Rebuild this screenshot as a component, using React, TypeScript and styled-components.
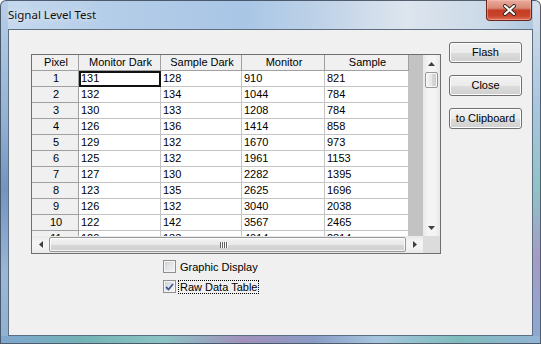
import styled, { createGlobalStyle } from 'styled-components';

type Row = [number, number, number, number, number];

const rows: Row[] = [
  [1, 131, 128, 910, 821],
  [2, 132, 134, 1044, 784],
  [3, 130, 133, 1208, 784],
  [4, 126, 136, 1414, 858],
  [5, 129, 132, 1670, 973],
  [6, 125, 132, 1961, 1153],
  [7, 127, 130, 2282, 1395],
  [8, 123, 135, 2625, 1696],
  [9, 126, 132, 3040, 2038],
  [10, 122, 142, 3567, 2465],
  [11, 120, 133, 4014, 2814],
];

const headers = ['Pixel', 'Monitor Dark', 'Sample Dark', 'Monitor', 'Sample'];

const GlobalStyle = createGlobalStyle`
  html, body {
    margin: 0;
    padding: 0;
    overflow: hidden;
    background: #fff;
  }
  body {
    font-family: "Liberation Sans", Arial, sans-serif;
  }
`;

const Window = styled.div`
  width: 541px;
  height: 344px;
  box-sizing: border-box;
  border: 1px solid rgba(40, 52, 70, 0.75);
  border-radius: 6px 6px 0 0;
  padding: 0 7px 7px;
  display: flex;
  flex-direction: column;
  background:
    linear-gradient(to right, #7fa6cf 0%, #73b3b5 15%, #8cc4c4 30%, #a190bb 45%, #8a9cc6 58%, #a6c6de 70%, #7fbcbc 85%, #93b4d6 100%) bottom / 100% 7px no-repeat,
    linear-gradient(#b8cee8 0%, #93b1d4 35%, #7494bf 55%, #9bb7d8 80%, #8fb0d2 100%) left / 7px 100% no-repeat,
    linear-gradient(#d6e0ea 0%, #a9c6de 30%, #8fc3c6 55%, #a59bc4 75%, #8aaad4 100%) right / 7px 100% no-repeat,
    linear-gradient(to right, #c6d9ee 0%, #b4cde8 20%, #a9c6e6 45%, #c0d3e8 60%, #dde5ee 75%, #cbd9e7 90%, #abc5df 100%);
`;

const TitleBar = styled.div`
  height: 28px;
  display: flex;
  align-items: flex-start;
`;

const Title = styled.div`
  margin-top: 7px;
  font-family: "Noto Sans", "Open Sans", sans-serif;
  font-size: 11.5px;
  line-height: 14px;
  color: #111;
  text-shadow: 0 0 6px rgba(255, 255, 255, 0.9);
`;

const CloseButton = styled.div`
  margin: -1px 1px 0 auto;
  width: 46px;
  height: 21px;
  box-sizing: border-box;
  border: 1px solid #6b2418;
  border-top: none;
  border-radius: 0 0 4px 4px;
  background: linear-gradient(180deg, #e9ab9c 0%, #d98a77 40%, #c43c23 52%, #c9452b 80%, #e0715a 100%);
  box-shadow: inset 0 0 0 1px rgba(255, 200, 190, 0.45);
  display: flex;
  align-items: center;
  justify-content: center;
`;

const Client = styled.div`
  width: 525px;
  height: 307px;
  box-sizing: border-box;
  border: 1px solid #5f6f82;
  background: #f0f0f0;
  padding: 12px 0 0 22px;
  display: flex;
  align-items: flex-start;
`;

const LeftColumn = styled.div`
  margin-top: 12px;
  display: flex;
  flex-direction: column;
`;

const GridFrame = styled.div`
  width: 410px;
  height: 200px;
  box-sizing: border-box;
  border: 1px solid #6e6e6e;
  display: grid;
  grid-template-columns: 391px 17px;
  grid-template-rows: 181px 17px;
  font-size: 11px;
  color: #000;
`;

const Cells = styled.div`
  background: #c3c3c3;
  overflow: hidden;
`;

const GridRow = styled.div`
  display: grid;
  grid-template-columns: 47px 82px 81px 83px 84px;
  width: 377px;
  height: 16px;
`;

const Cell = styled.div<{ $fixed?: boolean; $focus?: boolean }>`
  box-sizing: border-box;
  height: 16px;
  line-height: 15px;
  padding-left: 2px;
  white-space: nowrap;
  overflow: hidden;
  border-right: 1px solid ${({ $fixed }) => ($fixed ? '#a0a0a0' : '#c4c4c4')};
  border-bottom: 1px solid ${({ $fixed }) => ($fixed ? '#a0a0a0' : '#c4c4c4')};
  background: ${({ $fixed }) => ($fixed ? '#f0f0f0' : '#fff')};
  text-align: ${({ $fixed }) => ($fixed ? 'center' : 'left')};
  outline: ${({ $focus }) => ($focus ? '2px solid #111' : 'none')};
  outline-offset: -2px;
`;

const VScroll = styled.div`
  background: linear-gradient(to right, #e8e8e8 0%, #f4f4f4 30%, #f4f4f4 70%, #e8e8e8 100%);
  display: flex;
  flex-direction: column;
`;

const HScroll = styled.div`
  background: linear-gradient(#e8e8e8 0%, #f4f4f4 30%, #f4f4f4 70%, #e8e8e8 100%);
  display: flex;
`;

const Corner = styled.div`
  background: #dcdcdc;
`;

const ArrowButton = styled.div`
  width: 17px;
  height: 17px;
  flex: none;
  display: flex;
  align-items: center;
  justify-content: center;
`;

const Track = styled.div`
  flex: 1;
  display: flex;
`;

const Thumb = styled.div<{ $vertical?: boolean }>`
  box-sizing: border-box;
  border: 1px solid #979797;
  border-radius: 2px;
  background: ${({ $vertical }) =>
    $vertical
      ? 'linear-gradient(to right, #f3f3f3 0%, #e8e8e8 50%, #d8d8d8 51%, #cfcfcf 100%)'
      : 'linear-gradient(#f3f3f3 0%, #e8e8e8 50%, #d8d8d8 51%, #cfcfcf 100%)'};
  box-shadow: inset 0 0 0 1px rgba(255, 255, 255, 0.8);
  display: flex;
  align-items: center;
  justify-content: center;
  ${({ $vertical }) =>
    $vertical
      ? 'width: 13px; height: 16px; margin: 0 2px;'
      : 'flex: 1; height: 15px; margin: 1px 0 0;'}
`;

const Grip = styled.div`
  display: flex;
  gap: 1px;
  margin-left: -8px;
`;

const GripLine = styled.span`
  width: 1px;
  height: 6px;
  background: #5e5e5e;
  box-shadow: 1px 0 0 #fff;
`;

const Options = styled.div`
  margin: 6px 0 0 132px;
  display: flex;
  flex-direction: column;
  gap: 7px;
  font-size: 11px;
`;

const OptionRow = styled.label`
  height: 13px;
  display: flex;
  align-items: center;
  gap: 2px;
`;

const CheckBox = styled.span`
  width: 13px;
  height: 13px;
  box-sizing: border-box;
  border: 1px solid #8e8f8f;
  background: linear-gradient(135deg, #c9ced4 0%, #e4e6e9 50%, #f6f6f6 100%);
  box-shadow: inset 0 0 0 1px #f4f4f4;
  display: flex;
  align-items: center;
  justify-content: center;
`;

const OptionText = styled.span<{ $focused?: boolean }>`
  line-height: 12px;
  padding: 0 1px;
  border: 1px dotted ${({ $focused }) => ($focused ? '#000' : 'transparent')};
  color: #000;
`;

const ButtonColumn = styled.div`
  margin-left: 8px;
  display: flex;
  flex-direction: column;
  gap: 12px;
`;

const Button = styled.div`
  width: 73px;
  height: 21px;
  box-sizing: border-box;
  border: 1px solid #707070;
  border-radius: 3px;
  background: linear-gradient(#f2f2f2 0%, #ebebeb 50%, #dddddd 51%, #cfcfcf 100%);
  box-shadow: inset 0 0 0 1px #fcfcfc;
  font-size: 11px;
  line-height: 19px;
  text-align: center;
  color: #000;
`;

const Arrow = ({ dir }: { dir: 'up' | 'down' | 'left' | 'right' }) => {
  const points = {
    up: '0,4 3.5,0 7,4',
    down: '0,0 7,0 3.5,4',
    left: '4,0 4,7 0,3.5',
    right: '0,0 0,7 4,3.5',
  }[dir];
  const horizontal = dir === 'left' || dir === 'right';
  return (
    <svg width={horizontal ? 4 : 7} height={horizontal ? 7 : 4} viewBox={horizontal ? '0 0 4 7' : '0 0 7 4'}>
      <polygon points={points} fill="#404040" />
    </svg>
  );
};

const App = () => (
  <>
    <GlobalStyle />
    <Window>
      <TitleBar>
        <Title>Signal Level Test</Title>
        <CloseButton>
          <svg width="13" height="12" viewBox="0 0 13 12">
            <path d="M2 2 L11 10 M11 2 L2 10" stroke="#3a2a28" strokeWidth="4" strokeLinecap="round" />
            <path d="M2 2 L11 10 M11 2 L2 10" stroke="#fff" strokeWidth="2" strokeLinecap="round" />
          </svg>
        </CloseButton>
      </TitleBar>
      <Client>
        <LeftColumn>
          <GridFrame>
            <Cells>
              <GridRow>
                {headers.map((h) => (
                  <Cell key={h} $fixed>
                    {h}
                  </Cell>
                ))}
              </GridRow>
              {rows.map((r, i) => (
                <GridRow key={r[0]}>
                  <Cell $fixed>{r[0]}</Cell>
                  {r.slice(1).map((v, j) => (
                    <Cell key={j} $focus={i === 0 && j === 0}>
                      {v}
                    </Cell>
                  ))}
                </GridRow>
              ))}
            </Cells>
            <VScroll>
              <ArrowButton>
                <Arrow dir="up" />
              </ArrowButton>
              <Thumb $vertical />
              <Track />
              <ArrowButton>
                <Arrow dir="down" />
              </ArrowButton>
            </VScroll>
            <HScroll>
              <ArrowButton>
                <Arrow dir="left" />
              </ArrowButton>
              <Thumb>
                <Grip>
                  <GripLine />
                  <GripLine />
                  <GripLine />
                  <GripLine />
                </Grip>
              </Thumb>
              <ArrowButton>
                <Arrow dir="right" />
              </ArrowButton>
            </HScroll>
            <Corner />
          </GridFrame>
          <Options>
            <OptionRow>
              <CheckBox />
              <OptionText>Graphic Display</OptionText>
            </OptionRow>
            <OptionRow>
              <CheckBox>
                <svg width="9" height="8" viewBox="0 0 9 8">
                  <path d="M1 4 L3.5 6.5 L8 1" stroke="#3f5a98" strokeWidth="1.8" fill="none" />
                </svg>
              </CheckBox>
              <OptionText $focused>Raw Data Table</OptionText>
            </OptionRow>
          </Options>
        </LeftColumn>
        <ButtonColumn>
          <Button>Flash</Button>
          <Button>Close</Button>
          <Button>to Clipboard</Button>
        </ButtonColumn>
      </Client>
    </Window>
  </>
);

export default App;
